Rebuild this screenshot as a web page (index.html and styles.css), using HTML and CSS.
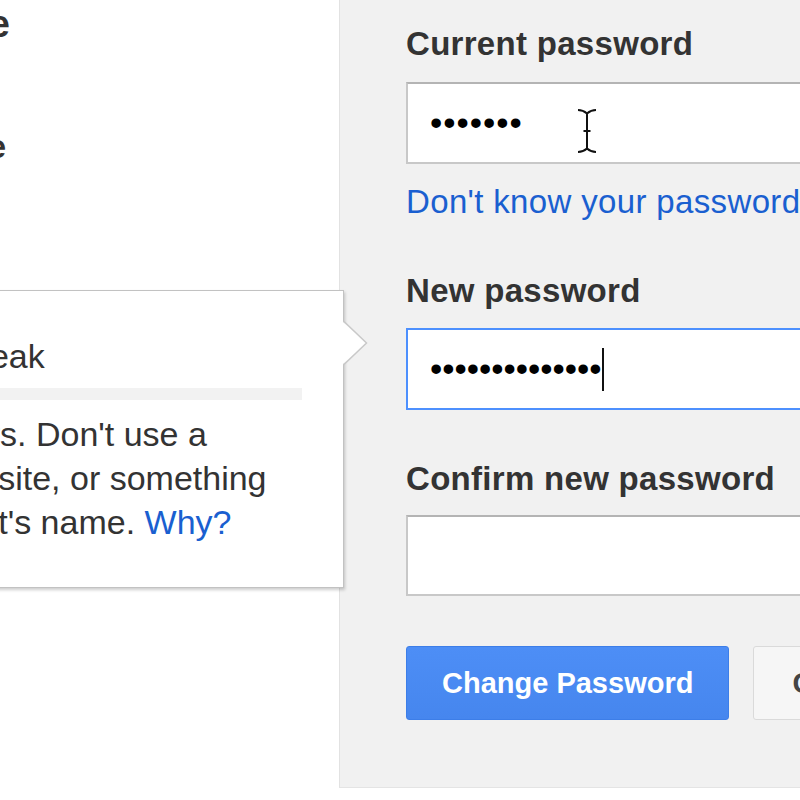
FILE: index.html
```html
<!DOCTYPE html>
<html lang="en">
<head>
<meta charset="utf-8">
<title>Change password</title>
<link rel="stylesheet" href="styles.css">
</head>
<body>
<div class="page">
  <aside class="side">
    <div class="side-row side-row--title"><span>Name</span></div>
    <div class="side-row side-row--sub"><span>Username</span></div>

    <div class="bubble">
      <div class="bubble-strength">Password strength: Weak</div>
      <div class="bubble-meter"></div>
      <p class="bubble-text">Use at least 8 characters. Don't use a<br>password from another site, or something<br>too obvious like your pet's name. <a class="bubble-link" href="#">Why?</a></p>
      <svg class="bubble-arrow" width="28" height="48" viewBox="0 0 28 48">
        <polygon points="0,2 24.5,24 0,46" fill="#fff"/>
        <polyline points="1.5,2 24.5,24 1.5,46" fill="none" stroke="#c9c9c9" stroke-width="1.5"/>
      </svg>
    </div>
  </aside>

  <main class="panel">
    <div class="label">Current password</div>
    <div class="field">
      <span class="dots dots--wide">•••••••</span>
      <svg class="ibeam" width="22" height="46" viewBox="0 0 22 46">
        <path d="M2 2 Q7 2 11 5.5 Q15 2 20 2 M11 5.5 V40.5 M2 44 Q7 44 11 40.5 Q15 44 20 44 M7.5 23 H14.5" fill="none" stroke="#fff" stroke-width="4"/>
        <path d="M2 2 Q7 2 11 5.5 Q15 2 20 2 M11 5.5 V40.5 M2 44 Q7 44 11 40.5 Q15 44 20 44 M7.5 23 H14.5" fill="none" stroke="#111" stroke-width="2"/>
      </svg>
    </div>
    <a class="link" href="#">Don't know your password?</a>

    <div class="label label--new">New password</div>
    <div class="field field--focus">
      <span class="dots">••••••••••••••</span><span class="caret"></span>
    </div>

    <div class="label label--confirm">Confirm new password</div>
    <div class="field field--last"></div>

    <div class="actions">
      <button class="btn btn--primary" type="button">Change Password</button>
      <button class="btn btn--plain" type="button">Cancel</button>
    </div>
  </main>
</div>
</body>
</html>
```

FILE: styles.css
```css
html, body {
  margin: 0;
  padding: 0;
  background: #fff;
}

body {
  width: 800px;
  height: 800px;
  overflow: hidden;
  font-family: "Liberation Sans", Arial, sans-serif;
  color: #333;
}

.page {
  display: flex;
  width: 800px;
  height: 800px;
  overflow: hidden;
  align-items: flex-start;
}

/* left column */
.side {
  position: relative;
  width: 339px;
  flex: none;
  height: 788px;
  display: flex;
  flex-direction: column;
}

.side-row {
  display: flex;
  justify-content: flex-end;
  white-space: nowrap;
}

.side-row--title {
  width: 10px;
  margin-top: 2px;
  font-size: 38px;
  line-height: 44px;
  font-weight: bold;
  color: #333;
}

.side-row--sub {
  width: 6px;
  margin-top: 82px;
  font-size: 33px;
  line-height: 38px;
  font-weight: bold;
  color: #333;
}

/* strength bubble */
.bubble {
  position: absolute;
  left: -380px;
  top: 290px;
  width: 724px;
  height: 298px;
  box-sizing: border-box;
  padding: 43px 0 0 20px;
  background: #fff;
  border: 1px solid #c2c2c2;
  box-shadow: 1px 2px 3px rgba(0, 0, 0, 0.2);
  white-space: nowrap;
  font-size: 34px;
  z-index: 2;
}

.bubble-strength {
  margin-left: 17px;
  line-height: 44px;
  color: #333;
}

.bubble-meter {
  margin-top: 10px;
  width: 661px;
  height: 12px;
  background: #f2f2f2;
}

.bubble-text {
  margin: 12px 0 0;
  line-height: 44px;
  color: #333;
}

.bubble-link {
  color: #1a5fd0;
  text-decoration: none;
}

.bubble-arrow {
  position: absolute;
  left: 721px;
  top: 28px;
}

/* right panel */
.panel {
  flex: 1;
  height: 788px;
  box-sizing: border-box;
  background: #f1f1f1;
  border-left: 1px solid #e2e2e2;
  border-bottom: 1px solid #e4e4e4;
  padding: 25px 0 0 66px;
  display: flex;
  flex-direction: column;
  align-items: flex-start;
}

.label {
  font-size: 33px;
  line-height: 38px;
  font-weight: bold;
  letter-spacing: 0.3px;
  color: #333;
  white-space: nowrap;
}

.label--new {
  margin-top: 51px;
}

.label--confirm {
  margin-top: 50px;
}

.field {
  position: relative;
  flex: none;
  width: 440px;
  height: 82px;
  box-sizing: border-box;
  margin-top: 19px;
  padding-left: 22px;
  background: #fff;
  border: 2px solid #c8c8c8;
  border-top-color: #b4b4b4;
  display: flex;
  align-items: center;
}

.field--focus {
  margin-top: 18px;
  border-color: #4d90fe;
}

.field--last {
  margin-top: 17px;
  height: 81px;
}

.dots {
  font-size: 35px;
  line-height: 40px;
  color: #000;
  white-space: nowrap;
}

.dots--wide {
  letter-spacing: 1px;
}

.caret {
  display: inline-block;
  width: 2px;
  height: 43px;
  background: #111;
}

.ibeam {
  position: absolute;
  left: 168px;
  top: 24px;
}

.link {
  margin-top: 19px;
  font-size: 33px;
  line-height: 38px;
  letter-spacing: 0.35px;
  color: #1a5fd0;
  text-decoration: none;
  white-space: nowrap;
}

.actions {
  display: flex;
  gap: 24px;
  margin-top: 50px;
}

.btn {
  flex: none;
  height: 74px;
  box-sizing: border-box;
  font-family: "Liberation Sans", Arial, sans-serif;
  font-size: 29px;
  font-weight: bold;
  border-radius: 3px;
  white-space: nowrap;
  cursor: pointer;
}

.btn--primary {
  padding: 0 35px;
  color: #fff;
  background: linear-gradient(#4d8ef6, #4686ee);
  border: 1px solid #3d7ee8;
}

.btn--plain {
  padding: 0 38px;
  color: #444;
  background: #f6f6f6;
  border: 1px solid #dadada;
}
```
